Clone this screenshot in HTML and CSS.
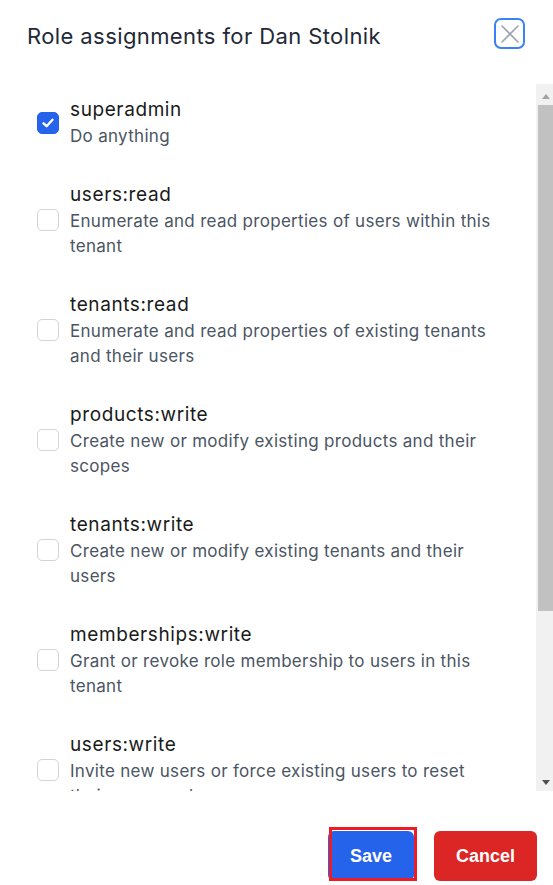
FILE: index.html
```html
<!DOCTYPE html>
<html lang="en">
  <head>
    <meta charset="UTF-8" />
    <meta name="viewport" content="width=device-width, initial-scale=1.0" />
    <title>Role assignments</title>
    <link rel="stylesheet" href="styles.css">
  </head>

  <body>
    <div class="dialog">
      <div class="dialog-header">
        <h1>Role assignments for Dan Stolnik</h1>
        <button class="close-button" aria-label="Close">
          <svg width="18" height="18" viewBox="0 0 18 18">
            <path d="M1 1 L17 17 M17 1 L1 17" stroke="#9ca3af" stroke-width="1.6" fill="none" stroke-linecap="round" />
          </svg>
        </button>
      </div>

      <div class="list-panel">
        <!-- Role list -->
        <ul class="role-list">
          <li class="role-item">
            <span class="checkbox checked">
              <svg width="14" height="14" viewBox="0 0 14 14">
                <path d="M2.5 7.3 L5.6 10.2 L11.5 3.8" stroke="#fff" stroke-width="2.4" fill="none" stroke-linecap="round" stroke-linejoin="round" />
              </svg>
            </span>
            <div class="role-text">
              <span class="role-name">superadmin</span>
              <span class="role-desc">Do anything</span>
            </div>
          </li>
          <li class="role-item">
            <span class="checkbox"></span>
            <div class="role-text">
              <span class="role-name">users:read</span>
              <span class="role-desc">Enumerate and read properties of users within this tenant</span>
            </div>
          </li>
          <li class="role-item">
            <span class="checkbox"></span>
            <div class="role-text">
              <span class="role-name">tenants:read</span>
              <span class="role-desc">Enumerate and read properties of existing tenants and their users</span>
            </div>
          </li>
          <li class="role-item">
            <span class="checkbox"></span>
            <div class="role-text">
              <span class="role-name">products:write</span>
              <span class="role-desc">Create new or modify existing products and their scopes</span>
            </div>
          </li>
          <li class="role-item">
            <span class="checkbox"></span>
            <div class="role-text">
              <span class="role-name">tenants:write</span>
              <span class="role-desc">Create new or modify existing tenants and their users</span>
            </div>
          </li>
          <li class="role-item">
            <span class="checkbox"></span>
            <div class="role-text">
              <span class="role-name">memberships:write</span>
              <span class="role-desc">Grant or revoke role membership to users in this tenant</span>
            </div>
          </li>
          <li class="role-item">
            <span class="checkbox"></span>
            <div class="role-text">
              <span class="role-name">users:write</span>
              <span class="role-desc">Invite new users or force existing users to reset their passwords</span>
            </div>
          </li>
        </ul>

        <!-- Scrollbar (the list is clipped, so it is drawn by hand) -->
        <div class="scrollbar">
          <span class="scroll-btn"><span class="arrow-up"></span></span>
          <div class="scroll-track">
            <div class="scroll-thumb"></div>
          </div>
          <span class="scroll-btn"><span class="arrow-down"></span></span>
        </div>
      </div>

      <div class="dialog-footer">
        <button class="btn btn-save">Save</button>
        <button class="btn btn-cancel">Cancel</button>
      </div>
    </div>
  </body>
</html>
```

FILE: styles.css
```css
:root {
  --primary-color: #2563eb;
  --danger-color: #dc2626;
  --text-color: #1a1a1a;
  --light-text: #4b5563;
  --border-color: #d1d5db;
}

* {
  box-sizing: border-box;
  margin: 0;
  padding: 0;
}

body {
  font-family: "Inter", sans-serif;
  color: var(--text-color);
  background-color: #fff;
}

.dialog {
  display: flex;
  flex-direction: column;
  height: 885px;
}

.dialog-header {
  height: 84px;
  display: flex;
  align-items: center;
  justify-content: space-between;
  padding: 0 28px 12px 27px;
}

h1 {
  font-size: 22px;
  font-weight: 400;
  letter-spacing: 0.4px;
  color: #1f2937;
}

.close-button {
  width: 31px;
  height: 31px;
  margin-bottom: 5px;
  border: 2px solid #3b82f6;
  border-radius: 7px;
  background: #fff;
  display: flex;
  align-items: center;
  justify-content: center;
  cursor: pointer;
}

/* Role list */
.list-panel {
  display: flex;
  height: 707px;
}

.role-list {
  flex: 1;
  list-style-type: none;
  overflow: hidden;
  padding: 12px 36px 0 37px;
}

.role-item {
  display: flex;
  align-items: center;
  gap: 11px;
  margin-bottom: 32px;
}

.checkbox {
  flex-shrink: 0;
  width: 22px;
  height: 22px;
  border: 1px solid var(--border-color);
  border-radius: 5px;
  display: flex;
  align-items: center;
  justify-content: center;
}

.checkbox.checked {
  background-color: var(--primary-color);
  border-color: var(--primary-color);
}

.role-text {
  display: flex;
  flex-direction: column;
}

.role-name {
  font-size: 19px;
  line-height: 28px;
  letter-spacing: 0.6px;
  color: var(--text-color);
}

.role-desc {
  font-size: 17px;
  line-height: 25px;
  letter-spacing: 0.3px;
  color: var(--light-text);
}

/* Scrollbar */
.scrollbar {
  width: 17px;
  display: flex;
  flex-direction: column;
  background-color: #f1f1f1;
}

.scroll-btn {
  height: 21px;
  display: flex;
  align-items: center;
  justify-content: center;
  padding-left: 3px;
}

.arrow-up {
  width: 0;
  height: 0;
  border-left: 4.5px solid transparent;
  border-right: 4.5px solid transparent;
  border-bottom: 5px solid #a3a3a3;
  margin-top: 3px;
}

.arrow-down {
  width: 0;
  height: 0;
  border-left: 4.5px solid transparent;
  border-right: 4.5px solid transparent;
  border-top: 5px solid #505050;
  margin-top: 3px;
}

.scroll-track {
  flex: 1;
  padding-left: 2px;
}

.scroll-thumb {
  height: 506px;
  background-color: #c1c1c1;
}

/* Footer buttons */
.dialog-footer {
  display: flex;
  justify-content: flex-end;
  gap: 20px;
  padding: 40px 16px 0;
}

.btn {
  height: 50px;
  padding: 0 22px;
  border: none;
  border-radius: 6px;
  color: #fff;
  font-family: "Liberation Sans", Arial, sans-serif;
  font-weight: 700;
  font-size: 18px;
  cursor: pointer;
}

.btn-save {
  position: relative;
  background-color: var(--primary-color);
}

/* red highlight frame round the save button */
.btn-save::after {
  content: "";
  position: absolute;
  top: -4px;
  left: 1px;
  right: -3px;
  bottom: 0;
  border: 3px solid #ed1c24;
}

.btn-cancel {
  background-color: var(--danger-color);
}
```
